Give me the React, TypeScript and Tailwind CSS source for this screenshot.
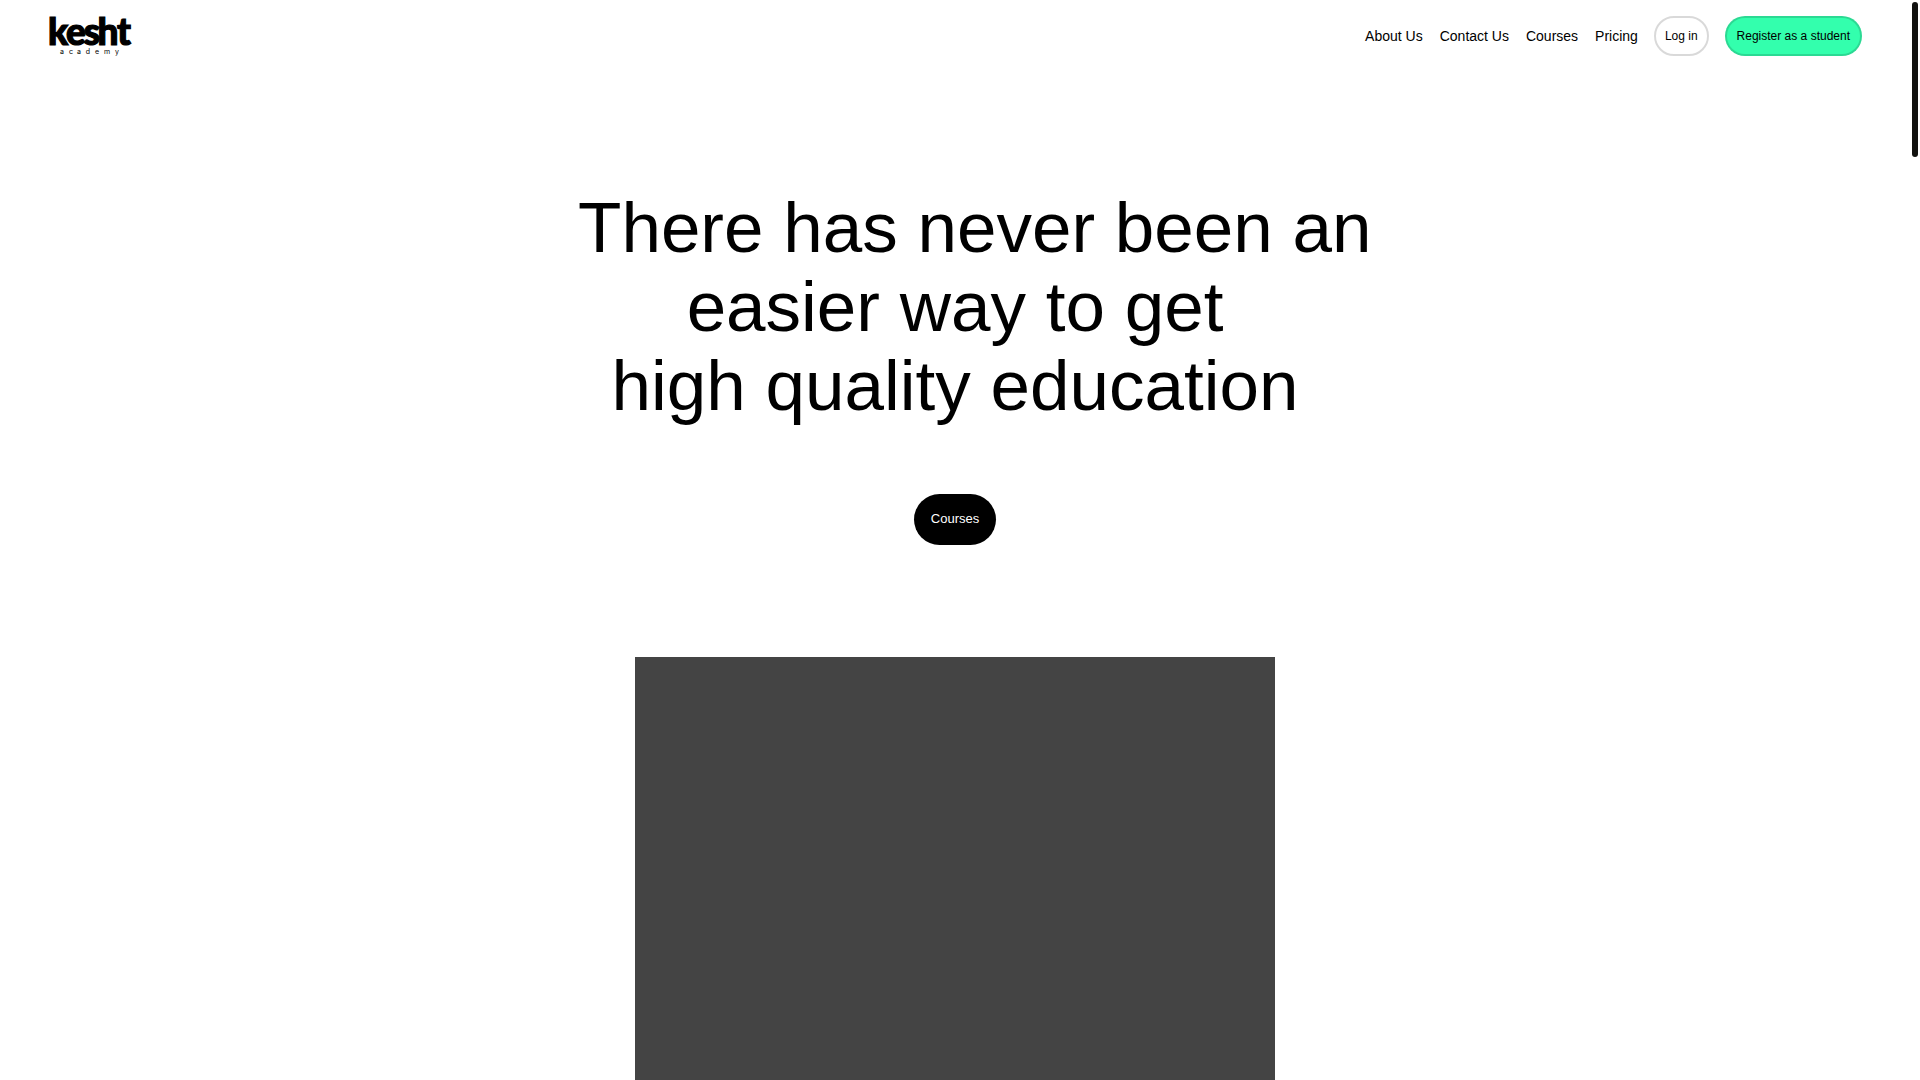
const links = ['About Us', 'Contact Us', 'Courses', 'Pricing']

function Logo() {
  return (
    <svg
      viewBox="0 0 84 40"
      className="h-10 w-21 overflow-visible"
      role="img"
      aria-label="kesht academy"
      textAnchor="middle"
    >
      <text
        x="10 28 44 60 76"
        y="29"
        fontFamily="Lato, sans-serif"
        fontWeight="900"
        fontSize="37"
        stroke="#000"
        strokeWidth="1.2"
      >
        kesht
      </text>
      <text
        x="14 23 31 40 49 59 69"
        y="38"
        fontFamily="Inter, sans-serif"
        fontSize="7"
      >
        academy
      </text>
    </svg>
  )
}

export default function App() {
  return (
    <div className="relative flex h-screen flex-col overflow-hidden bg-white pr-2.5 font-['Liberation_Sans',Arial,sans-serif] text-black">
      <header className="flex items-center justify-between px-12 py-4">
        <a href="#home">
          <Logo />
        </a>
        <nav className="flex items-center gap-4">
          <div className="flex items-center gap-[17px] text-sm">
            {links.map((label) => (
              <a key={label} href="#section" className="hover:underline">
                {label}
              </a>
            ))}
          </div>
          <button
            type="button"
            className="h-10 rounded-full border-2 border-black/15 px-[9px] text-xs"
          >
            Log in
          </button>
          <button
            type="button"
            className="h-10 rounded-full border-2 border-black/15 bg-[#33ffad] px-2.5 text-xs"
          >
            Register as a student
          </button>
        </nav>
      </header>

      <main className="flex flex-1 flex-col items-center">
        <h1 className="mt-29 text-center text-[71px] leading-[79px]">
          {'\u00a0\u00a0There has never been an'}
          <br />
          easier way to get
          <br />
          high quality education
        </h1>
        <a
          href="#courses"
          className="mt-[69px] flex h-[51px] items-center rounded-full bg-black px-[17px] pb-0.5 text-[13px] text-white"
        >
          Courses
        </a>
        {/* video placeholder, runs past the fold */}
        <div className="mt-28 w-full max-w-[640px] flex-1 bg-[#444444]" />
      </main>

      {/* scroll thumb */}
      <div className="absolute top-0.5 right-0.5 h-[155px] w-1.5 rounded-full bg-[#11110f]" />
    </div>
  )
}
